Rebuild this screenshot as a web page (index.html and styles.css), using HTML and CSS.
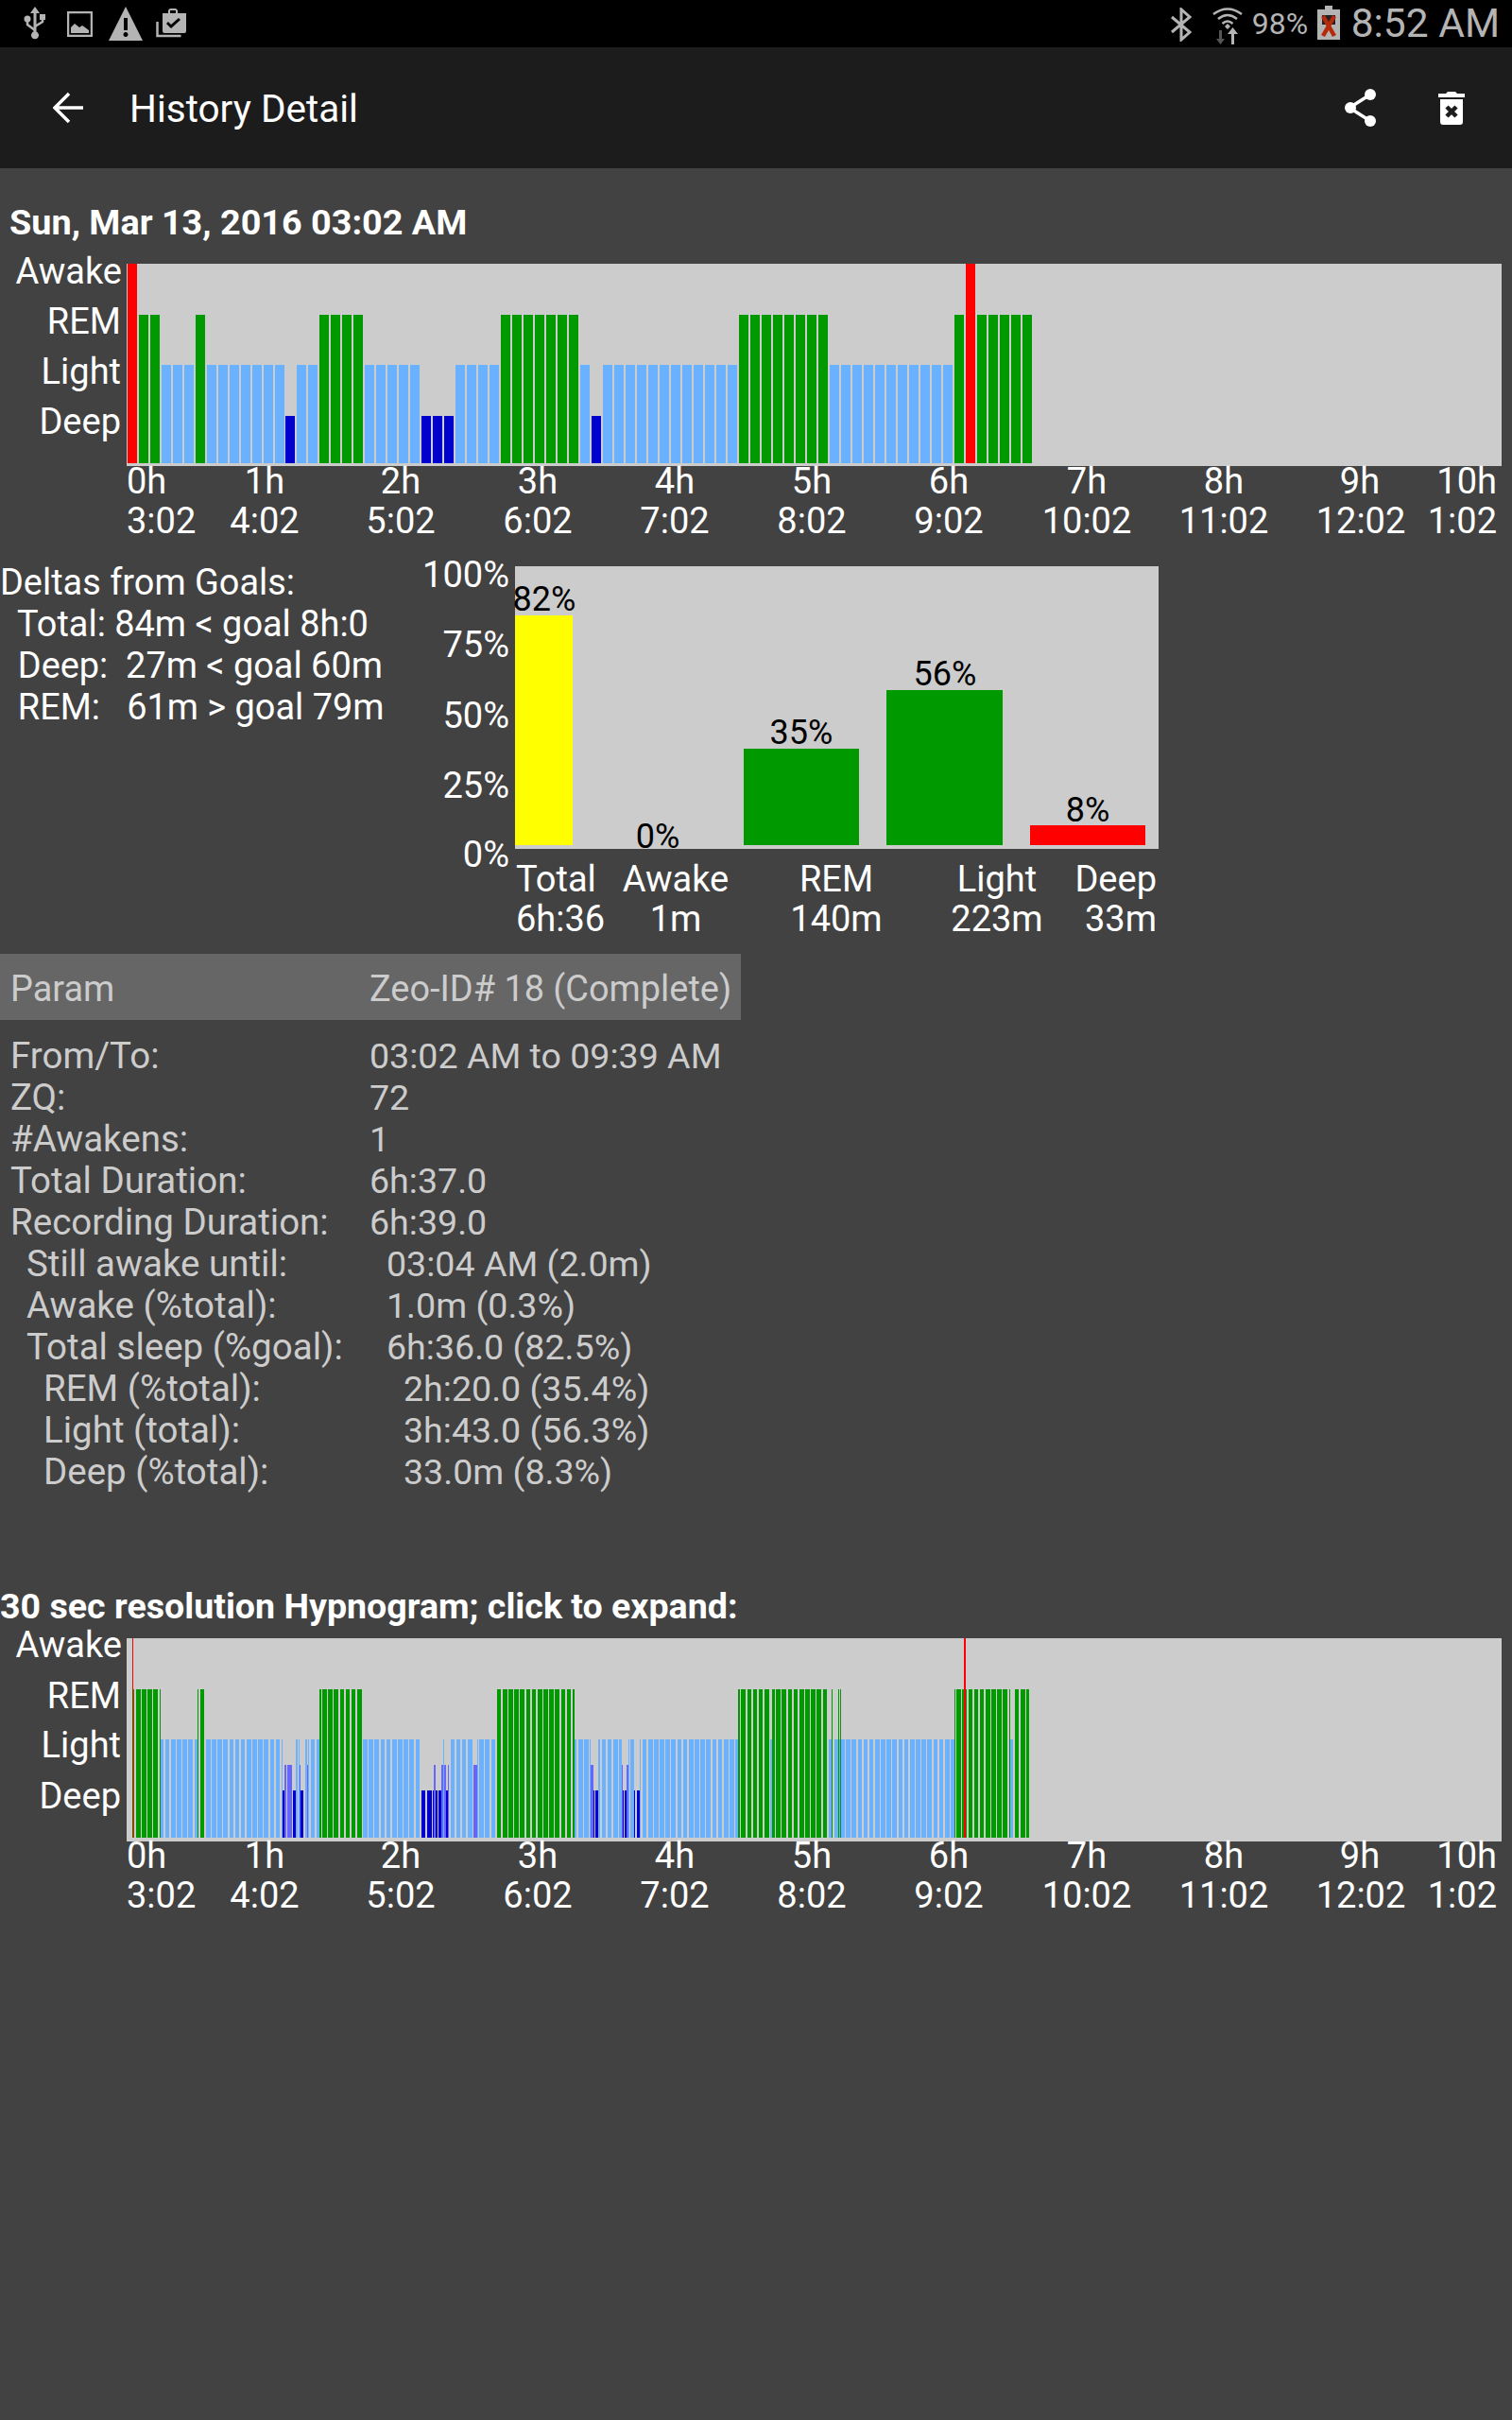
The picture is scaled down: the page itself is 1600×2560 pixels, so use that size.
FILE: index.html
```html
<!DOCTYPE html>
<html lang="en">
<head>
  <meta charset="UTF-8" />
  <title>History Detail</title>
  <link rel="stylesheet" href="styles.css">
</head>
<body>
  <div class="status-bar">
    <div class="status-left">
      <svg class="ic-usb" width="24" height="36" viewBox="0 0 24 36">
        <path class="ic-fill" d="M12 0l5 7h-3.500v19.500a4 4 0 1 1-3 0V7H7z"/>
        <path class="ic-line" d="M12 25L4 19v-4M12 21l8-5v-4"/>
        <circle class="ic-fill" cx="4" cy="13" r="3.500"/>
        <rect class="ic-fill" x="17" y="8" width="6" height="6"/>
      </svg>
      <svg class="ic-image" width="27" height="27" viewBox="0 0 27 27">
        <rect class="ic-line" x="1" y="1" width="25" height="25"/>
        <path class="ic-fill" d="M4 23v-6l4-4 5 4 3-2 3 2 4 3v3z"/>
      </svg>
      <svg class="ic-warn" width="36" height="36" viewBox="0 0 36 36">
        <path class="ic-fill" fill-rule="evenodd" d="M18 0l18 36H0zM16 12v13h4V12zM18 27a2.500 2.500 0 1 0 .01 0z"/>
      </svg>
      <svg class="ic-task" width="33" height="32" viewBox="0 0 33 32">
        <path class="ic-line" d="M1.500 15v15h25"/>
        <path class="ic-fill" fill-rule="evenodd" d="M7 6h6V3a3 3 0 0 1 3-2h4a3 3 0 0 1 3 2v3h9v19q0 2-2 2H9q-2 0-2-2zM15 6h6V3h-6zM13 15l-2 2 5 5 10-9-2-2-8 7z"/>
      </svg>
    </div>
    <div class="status-right">
      <svg class="ic-bt" width="22" height="36" viewBox="0 0 22 36">
        <path class="ic-line ic-thick" d="M1 10l19 16-9 8V2l9 8L1 26"/>
      </svg>
      <svg class="ic-wifi" width="32" height="36" viewBox="0 0 32 36">
        <path class="ic-line" d="M1 8q15-11 30 0M6 13q10-8 20 0M10.500 18q5.500-5 11 0"/>
        <path class="ic-fill" d="M13 21l3-3 3 3-3 3z"/>
        <path class="ic-dim" d="M7 25h3v9h3l-4.500 6L4 34h3z"/>
        <path class="ic-fill" d="M20 40h3v-11h4l-5.500-7L16 29h4z"/>
      </svg>
      <span class="battery-pct">98%</span>
      <svg class="ic-battery" width="24" height="36" viewBox="0 0 24 36">
        <path class="ic-fill" d="M8 0h8v4h8v32H0V4h8z"/>
        <rect x="5" y="10" width="14" height="10" fill="#222"/>
        <path class="ic-x" d="M6 11l12 21M18 11L6 32"/>
      </svg>
      <span class="clock">8:52 AM</span>
    </div>
  </div>

  <div class="app-bar">
    <svg class="ic-back" width="32" height="34" viewBox="0 0 32 34">
      <path d="M32 17H3M17 2L2 17l15 15"/>
    </svg>
    <span class="app-title">History Detail</span>
    <svg class="ic-share" width="36" height="40" viewBox="0 0 36 40">
      <path class="share-line" d="M28 6L6 20l22 14"/>
      <circle cx="28" cy="6" r="6"/>
      <circle cx="7" cy="20" r="6"/>
      <circle cx="28" cy="34" r="6"/>
    </svg>
    <svg class="ic-trash" width="28" height="36" viewBox="0 0 28 36">
      <path d="M0 3h8l2-2h8l2 2h8v4H0zM2 9h24v24q0 3-3 3H5q-3 0-3-3z"/>
      <path class="trash-x" d="M9 17l10 10M19 17L9 27"/>
    </svg>
  </div>

  <h2 class="title">Sun, Mar 13, 2016 03:02 AM</h2>
  <svg class="chart" id="epochs" width="1600" height="320">
    <rect class="plot" x="134" y="21" width="1455" height="214"/>
    <g id="epochs-bars"></g>
    <g class="lbl end">
      <text x="129" y="42">Awake</text>
      <text x="128" y="95">REM</text>
      <text x="128" y="148">Light</text>
      <text x="128" y="201">Deep</text>
    </g>
    <g class="lbl mid">
      <text x="134" y="264" class="start">0h</text>
      <text x="280" y="264">1h</text>
      <text x="424" y="264">2h</text>
      <text x="569" y="264">3h</text>
      <text x="714" y="264">4h</text>
      <text x="859" y="264">5h</text>
      <text x="1004" y="264">6h</text>
      <text x="1150" y="264">7h</text>
      <text x="1295" y="264">8h</text>
      <text x="1439" y="264">9h</text>
      <text x="1584" y="264" class="last">10h</text>
      <text x="134" y="306" class="start">3:02</text>
      <text x="280" y="306">4:02</text>
      <text x="424" y="306">5:02</text>
      <text x="569" y="306">6:02</text>
      <text x="714" y="306">7:02</text>
      <text x="859" y="306">8:02</text>
      <text x="1004" y="306">9:02</text>
      <text x="1150" y="306">10:02</text>
      <text x="1295" y="306">11:02</text>
      <text x="1440" y="306">12:02</text>
      <text x="1584" y="306" class="last">1:02</text>
    </g>
  </svg>

  <div class="summary">
    <pre class="deltas">Deltas from Goals:
  Total: 84m &lt; goal 8h:0
  Deep:  27m &lt; goal 60m
  REM:   61m &gt; goal 79m</pre>
    <svg class="goals" width="800" height="420" viewBox="-60 -10 800 420">
      <rect class="plot" x="45" y="9" width="681" height="299"/>
      <rect class="b-yellow" x="45" y="61" width="61" height="243"/>
      <rect class="b-rem" x="287" y="202" width="122" height="102"/>
      <rect class="b-rem" x="438" y="140" width="123" height="164"/>
      <rect class="b-awake" x="590" y="283" width="122" height="21"/>
      <g class="lbl end">
        <text x="39" y="30.500">100%</text>
        <text x="39" y="104.500">75%</text>
        <text x="39" y="179.500">50%</text>
        <text x="39" y="253.500">25%</text>
        <text x="39" y="326.500">0%</text>
      </g>
      <g class="pct">
        <text x="76" y="56">82%</text>
        <text x="196" y="307">0%</text>
        <text x="348" y="197">35%</text>
        <text x="500" y="135">56%</text>
        <text x="651" y="279">8%</text>
      </g>
      <g class="lbl mid">
        <text x="46" y="353" class="start">Total</text>
        <text x="215" y="353">Awake</text>
        <text x="385" y="353">REM</text>
        <text x="555" y="353">Light</text>
        <text x="724" y="353" class="last">Deep</text>
        <text x="46" y="395" class="start">6h:36</text>
        <text x="215" y="395">1m</text>
        <text x="385" y="395">140m</text>
        <text x="555" y="395">223m</text>
        <text x="724" y="395" class="last">33m</text>
      </g>
    </svg>
  </div>

  <table class="params">
    <thead>
      <tr><th>Param</th><th>Zeo-ID# 18 (Complete)</th></tr>
    </thead>
    <tbody>
      <tr><td>From/To:</td><td>03:02 AM to 09:39 AM</td></tr>
      <tr><td>ZQ:</td><td>72</td></tr>
      <tr><td>#Awakens:</td><td>1</td></tr>
      <tr><td>Total Duration:</td><td>6h:37.0</td></tr>
      <tr><td>Recording Duration:</td><td>6h:39.0</td></tr>
      <tr class="lvl1"><td>Still awake until:</td><td>03:04 AM (2.0m)</td></tr>
      <tr class="lvl1"><td>Awake (%total):</td><td>1.0m (0.3%)</td></tr>
      <tr class="lvl1"><td>Total sleep (%goal):</td><td>6h:36.0 (82.5%)</td></tr>
      <tr class="lvl2"><td>REM (%total):</td><td>2h:20.0 (35.4%)</td></tr>
      <tr class="lvl2"><td>Light (total):</td><td>3h:43.0 (56.3%)</td></tr>
      <tr class="lvl2"><td>Deep (%total):</td><td>33.0m (8.3%)</td></tr>
    </tbody>
  </table>

  <h2 class="hypno-title">30 sec resolution Hypnogram; click to expand:</h2>
  <svg class="chart hypno" id="hypno" width="1600" height="330" viewBox="0 -10 1600 330">
    <rect class="plot" x="134" y="12" width="1455" height="215"/>
    <g id="hypno-bars"></g>
    <g class="lbl end">
      <text x="129" y="32">Awake</text>
      <text x="128" y="86">REM</text>
      <text x="128" y="138">Light</text>
      <text x="128" y="192">Deep</text>
    </g>
    <g class="lbl mid">
      <text x="134" y="255" class="start">0h</text>
      <text x="280" y="255">1h</text>
      <text x="424" y="255">2h</text>
      <text x="569" y="255">3h</text>
      <text x="714" y="255">4h</text>
      <text x="859" y="255">5h</text>
      <text x="1004" y="255">6h</text>
      <text x="1150" y="255">7h</text>
      <text x="1295" y="255">8h</text>
      <text x="1439" y="255">9h</text>
      <text x="1584" y="255" class="last">10h</text>
      <text x="134" y="297" class="start">3:02</text>
      <text x="280" y="297">4:02</text>
      <text x="424" y="297">5:02</text>
      <text x="569" y="297">6:02</text>
      <text x="714" y="297">7:02</text>
      <text x="859" y="297">8:02</text>
      <text x="1004" y="297">9:02</text>
      <text x="1150" y="297">10:02</text>
      <text x="1295" y="297">11:02</text>
      <text x="1440" y="297">12:02</text>
      <text x="1584" y="297" class="last">1:02</text>
    </g>
  </svg>

  <script src="charts.js"></script>
</body>
</html>
```

FILE: styles.css
```css
body {
  margin: 0;
  min-height: 2560px;
  background-color: #424242;
  font-family: Roboto, "Liberation Sans", sans-serif;
  color: #fff;
  overflow-x: hidden;
}

/* status bar */
.status-bar {
  display: flex;
  justify-content: space-between;
  height: 50px;
  background: #000;
  color: #b4b4b4;
}
.status-left {
  display: flex;
  align-items: flex-start;
  padding: 7px 0 0 25px;
}
.status-right {
  display: flex;
  align-items: flex-start;
  padding: 0 13px 0 0;
}
.ic-fill { fill: #b4b4b4; }
.ic-dim { fill: #555; }
.ic-line { fill: none; stroke: #b4b4b4; stroke-width: 2.5; }
.ic-thick { stroke-width: 3; }
.ic-x { fill: none; stroke: #b52a0a; stroke-width: 4.5; }
.ic-image { margin: 5px 0 0 22px; }
.ic-warn { margin-left: 17px; }
.ic-task { margin: 1px 0 0 14px; }
.ic-bt { margin-top: 8px; }
.ic-wifi { margin: 7px 0 0 22px; overflow: visible; }
.battery-pct {
  margin-left: 10px;
  font-size: 32px;
  line-height: 50px;
  width: 62px;
}
.ic-battery { margin: 6px 0 0 7px; }
.clock {
  margin-left: 12px;
  font-size: 42.5px;
  line-height: 50px;
}

/* action bar */
.app-bar {
  display: flex;
  align-items: center;
  height: 128px;
  background: #1c1c1c;
  padding-left: 56px;
}
.ic-back path { fill: none; stroke: #fff; stroke-width: 3.500; }
.app-title {
  margin-left: 49px;
  padding-top: 2px;
  font-size: 40.5px;
  flex: 1;
}
.ic-share { margin-right: 64px; }
.ic-share circle { fill: #fff; }
.share-line { fill: none; stroke: #fff; stroke-width: 3.500; }
.ic-trash { margin-right: 50px; }
.ic-trash path { fill: #fff; }
.ic-trash .trash-x { fill: none; stroke: #1c1c1c; stroke-width: 4.500; }

/* headings */
.title {
  margin: 0;
  padding: 35px 0 0 10px;
  font-size: 37.8px;
  line-height: 44px;
  font-weight: 700;
}
.hypno-title {
  margin: 98px 0 0;
  font-size: 37.6px;
  line-height: 44px;
  font-weight: 700;
}

/* charts */
.chart, .goals { display: block; }
#epochs { margin-top: 1px; }
.hypno { margin-top: -10px; }
.plot { fill: #ccc; }
.lbl text { fill: #fff; font-size: 38px; }
.lbl.end text { text-anchor: end; }
.lbl.mid text { text-anchor: middle; }
.lbl.mid text.start { text-anchor: start; }
.lbl.mid text.last { text-anchor: end; }
.pct text { fill: #000; font-size: 36px; text-anchor: middle; }
.b-yellow { fill: #ff0; }
.b-rem { fill: #090; }
.b-light { fill: #6ab2ff; }
.b-mid { fill: #66f; }
.b-deep { fill: #00c; }
.b-awake { fill: #f00; }

/* goals row */
.summary {
  display: flex;
  margin-top: 2px;
}
.deltas {
  width: 440px;
  margin: 14px 0 0;
  flex: none;
  font-family: inherit;
  font-size: 37.9px;
  line-height: 44px;
}

/* params table */
.params {
  margin-top: 9px;
  width: 784px;
  border-collapse: collapse;
  table-layout: fixed;
  color: #ccc;
  font-size: 37.6px;
}
.params th {
  height: 66px;
  padding: 4px 0 0;
  background: #666;
  font-size: 37.9px;
  font-weight: 400;
  text-align: left;
}
.params th:first-child, .params td:first-child {
  width: 380px;
  padding-left: 11px;
}
.params td:first-child { font-size: 38.5px; }
.params td {
  height: 44px;
  padding: 0;
  line-height: 44px;
  white-space: nowrap;
}
.params tbody::before {
  content: "";
  display: block;
  height: 16px;
}
.lvl1 td:first-child { padding-left: 28px; }
.lvl1 td + td { padding-left: 18px; }
.lvl2 td:first-child { padding-left: 46px; }
.lvl2 td + td { padding-left: 36px; }
```

FILE: charts.js
```js
var NS = 'http://www.w3.org/2000/svg';

function addBar(g, cls, x, w, top, bottom) {
  var r = document.createElementNS(NS, 'rect');
  r.setAttribute('class', cls);
  r.setAttribute('x', x);
  r.setAttribute('y', top);
  r.setAttribute('width', w);
  r.setAttribute('height', bottom - top);
  g.appendChild(r);
}

// 5 minute epochs, one letter each
function rep(c, n) { return new Array(n + 1).join(c); }
var epochs = 'A' + rep('R', 2) + rep('L', 3) + 'R' + rep('L', 7) + 'D' + rep('L', 2) +
  rep('R', 4) + rep('L', 5) + rep('D', 3) + rep('L', 4) + rep('R', 7) + 'LD' + rep('L', 12) +
  rep('R', 8) + rep('L', 11) + 'RA' + rep('R', 5);

var classes = { A: 'b-awake', R: 'b-rem', L: 'b-light', D: 'b-deep' };
var tops = { A: 21, R: 75, L: 128, D: 182 };
var g1 = document.getElementById('epochs-bars');
for (var i = 0; i < epochs.length; i++) {
  var c = epochs.charAt(i);
  addBar(g1, classes[c], Math.round(134.7 + 11.985 * i), 10, tops[c], 232);
}

// 30 sec data, already merged to runs of [from, to] pixels
var hypno = {
  light: [[170,173],[175,179],[181,186],[187,192],[193,198],[199,204],[206,209],[218,223],[224,229],[230,235],
    [236,241],[243,247],[249,253],[255,259],[261,266],[267,272],[273,278],[279,284],[286,290],[292,296],[298,299],
    [313,315],[316,317],[323,325],[326,327],[329,333],[335,338],[384,389],[390,395],[396,401],[403,407],[409,413],
    [415,420],[421,426],[427,432],[433,438],[440,444],[469,470],[477,481],[483,487],[489,493],[495,500],[505,506],
    [507,512],[513,518],[520,524],[608,610],[612,617],[618,623],[624,625],[633,635],[637,641],[643,647],[649,654],
    [655,658],[665,666],[667,671],[677,678],[680,684],[686,691],[692,697],[698,703],[704,709],[710,715],[717,721],
    [723,727],[729,734],[735,740],[741,746],[747,752],[754,758],[760,764],[766,771],[772,777],[778,781],[815,817],
    [877,880],[883,887],[888,889],[890,894],[895,900],[901,906],[908,912],[914,918],[920,924],[926,931],[932,937],
    [938,943],[944,949],[951,955],[957,961],[963,968],[969,974],[975,980],[981,986],[988,992],[994,998],[1000,1005],
    [1006,1010],[1069,1072]],
  mid: [[301,303],[304,309],[317,318],[325,326],[459,461],[467,469],[470,472],[474,475],[501,505],[625,628],
    [658,659],[663,665]],
  deep: [[299,301],[310,313],[318,321],[446,450],[452,457],[458,459],[461,463],[464,467],[472,474],[628,629],
    [630,633],[659,660],[661,663],[671,672],[674,677]],
  rem: [[141,142],[144,149],[150,155],[156,161],[162,167],[169,170],[209,210],[212,216],[338,340],[341,346],[347,352],
    [353,358],[360,364],[366,370],[372,376],[378,383],[526,530],[532,537],[538,543],[544,549],[550,555],[557,561],
    [563,567],[569,574],[575,580],[581,586],[587,592],[594,598],[600,604],[606,608],[781,783],[784,789],[791,795],
    [797,801],[803,807],[809,814],[817,820],[821,826],[827,832],[834,838],[840,844],[846,851],[852,857],[858,863],
    [864,869],[871,875],[880,881],[887,888],[889,890],[1010,1011],[1012,1017],[1018,1023],[1025,1029],[1031,1035],
    [1037,1041],[1043,1048],[1049,1054],[1055,1060],[1061,1066],[1068,1069],[1074,1078],[1080,1085],[1086,1089]],
  awake: [[140,141],[1020,1022]]
};
var hypnoTops = { awake: 12, rem: 66, light: 119, mid: 146, deep: 173 };
var g2 = document.getElementById('hypno-bars');
['light', 'mid', 'deep', 'rem', 'awake'].forEach(function (k) {
  hypno[k].forEach(function (run) {
    addBar(g2, 'b-' + k, run[0], run[1] - run[0], hypnoTops[k], 223);
  });
});
```
